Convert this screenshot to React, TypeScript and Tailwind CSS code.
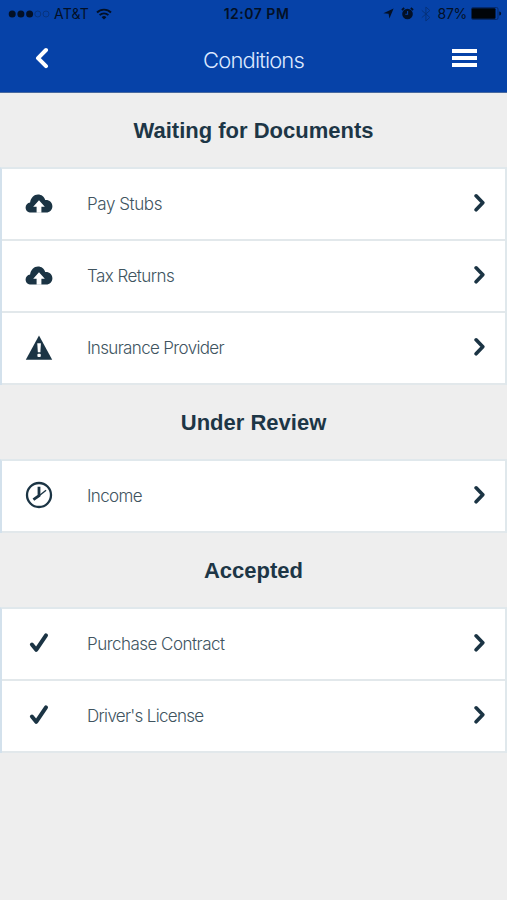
import type { ReactNode } from 'react'

interface Condition {
  name: string
  icon: ReactNode
  tracking: string
}

interface Section {
  title: string
  items: Condition[]
}

function CloudIcon() {
  return (
    <svg width="28" height="20" viewBox="0 0 28 20">
      <path
        d="M6.2 18.6C2.8 18.6.6 16.4.6 13.5c0-2.6 1.9-4.7 4.5-5C5.7 4 9 .6 13 .6c3.5 0 6.2 2.1 7.2 5.5 4.2-.3 7.2 2.5 7.2 6.2 0 3.6-2.7 6.3-6.2 6.3z"
        fill="#1b3444"
      />
      <path d="M14 6.2l5.8 6.6h-3.4v5.9h-4.8v-5.9H8.2z" fill="#fff" />
    </svg>
  )
}

function WarningIcon() {
  return (
    <svg width="28" height="26" viewBox="0 0 28 26">
      <path d="M14 .4L27.2 24.8H.8z" fill="#1b3444" />
      <path d="M12.3 8.2h3.6l-.5 9h-2.6z" fill="#fff" />
      <rect x="12.4" y="18.8" width="3.4" height="3.2" rx="1" fill="#fff" />
    </svg>
  )
}

function ClockIcon() {
  return (
    <svg width="28" height="28" viewBox="0 0 28 28" fill="none" stroke="#1b3444" className="-mt-px">
      <circle cx="14" cy="14" r="12" strokeWidth="2.3" />
      <path d="M14 5.8v8.9l-5.6 3.9" strokeWidth="2.8" />
      <path d="M13.5 15.2l7.6-5.9" strokeWidth="1.4" />
    </svg>
  )
}

function CheckIcon() {
  return (
    <svg width="20" height="22" viewBox="0 0 20 22" fill="none" className="-mt-px">
      <path d="M2.9 12.6l4.3 5.2L17 3.4" stroke="#1b3444" strokeWidth="4" strokeLinecap="round" strokeLinejoin="round" />
    </svg>
  )
}

const sections: Section[] = [
  {
    title: 'Waiting for Documents',
    items: [
      { name: 'Pay Stubs', icon: <CloudIcon />, tracking: 'tracking-[-0.42px]' },
      { name: 'Tax Returns', icon: <CloudIcon />, tracking: 'tracking-[-0.56px]' },
      { name: 'Insurance Provider', icon: <WarningIcon />, tracking: 'tracking-[-0.65px]' },
    ],
  },
  {
    title: 'Under Review',
    items: [{ name: 'Income', icon: <ClockIcon />, tracking: 'tracking-[-0.65px]' }],
  },
  {
    title: 'Accepted',
    items: [
      { name: 'Purchase Contract', icon: <CheckIcon />, tracking: 'tracking-[-0.52px]' },
      { name: "Driver's License", icon: <CheckIcon />, tracking: 'tracking-[-0.7px]' },
    ],
  },
]

function StatusBar() {
  return (
    <div className="grid h-7 grid-cols-[1fr_auto_1fr] items-center pb-px pl-2 pr-[5px] text-[14px] text-[#031026]">
      <div className="flex items-center">
        <svg width="42" height="8" viewBox="0 0 42 8">
          <circle cx="4.2" cy="4" r="3.5" fill="#031026" />
          <circle cx="12.9" cy="4" r="3.5" fill="#031026" />
          <circle cx="21.6" cy="4" r="3.5" fill="#031026" />
          <circle cx="29.8" cy="4" r="3" fill="none" stroke="#06347f" />
          <circle cx="38" cy="4" r="3" fill="none" stroke="#06347f" />
        </svg>
        <span className="ml-1 tracking-[0.2px]">AT&amp;T</span>
        <svg className="ml-[7px]" width="16" height="12" viewBox="0 0 16 12" fill="none" stroke="#031026">
          <path d="M1 4.5a10 10 0 0 1 14 0" strokeWidth="1.9" />
          <path d="M3.6 7.2a6.2 6.2 0 0 1 8.8 0" strokeWidth="1.8" />
          <path d="M8 11.6L5.6 9.2a3.4 3.4 0 0 1 4.8 0z" fill="#031026" stroke="none" />
        </svg>
      </div>
      <span className="pl-[3px] text-[14px] font-semibold tracking-[0.5px]">12:07 PM</span>
      <div className="flex items-center justify-end">
        <svg width="11" height="11" viewBox="0 0 11 11">
          <path d="M10.6.4L6.4 10.6 5.6 5.8.4 5.2z" fill="#031026" />
        </svg>
        <svg className="ml-[7px]" width="13" height="13" viewBox="0 0 13 13" fill="none">
          <circle cx="6.5" cy="7" r="5.3" fill="#031026" />
          <path d="M.9 3L3.2 1M12.1 3L9.8 1" stroke="#031026" strokeWidth="1.7" />
          <path d="M6.6 4v3.2H4.3" stroke="#0642a8" strokeWidth="1.1" />
        </svg>
        <svg className="ml-[7px]" width="10" height="16" viewBox="0 0 10 16" fill="none" stroke="#06327b">
          <path d="M.8 4.4l8 7L4.9 15V1l3.9 3.5-8 7.1" />
        </svg>
        <span className="ml-[7px] tracking-[-0.3px]">87%</span>
        <svg className="ml-1" width="31" height="13" viewBox="0 0 31 13">
          <rect x=".5" y=".5" width="26.5" height="12" rx="1.5" fill="none" stroke="#052a6c" />
          <rect x=".8" y="1.2" width="23.7" height="10.6" rx="1" fill="#010509" />
          <path d="M28.3 4.4c1.2.2 1.8 1 1.8 2.1s-.6 1.9-1.8 2.1z" fill="#031026" />
        </svg>
      </div>
    </div>
  )
}

export default function App() {
  return (
    <div className="flex h-[900px] w-[507px] flex-col overflow-hidden bg-[#eeeeee] font-['Inter',sans-serif]">
      <header className="h-[93px] border-b border-[#48699f] bg-[#0642a8]">
        <StatusBar />
        <div className="grid h-16 grid-cols-[1fr_auto_1fr] items-center pl-[35px] pr-[30px]">
          <svg width="14" height="22" viewBox="0 0 14 22" fill="none" className="-mt-1">
            <path d="M11 3L3 11.2l8 8" stroke="#fff" strokeWidth="4" strokeLinecap="round" strokeLinejoin="round" />
          </svg>
          <h1 className="pr-[5px] text-[22px] font-light tracking-[-0.85px] text-[#dce8ff]">Conditions</h1>
          <div className="-mt-1 flex w-[25px] flex-col gap-[3px] justify-self-end">
            <div className="h-1 bg-white" />
            <div className="h-1 bg-white" />
            <div className="h-1 bg-white" />
          </div>
        </div>
      </header>

      {sections.map((section) => (
        <section key={section.title}>
          <h2 className="flex h-[74px] items-center justify-center font-['Liberation_Sans',sans-serif] text-[22px] font-bold text-[#1d3646]">
            {section.title}
          </h2>
          <ul className="border-x-2 border-t-2 border-[#e0e8ec] border-l-[#d3e1ec]">
            {section.items.map((item) => (
              <li key={item.name} className="flex h-[72px] items-center border-b-2 border-[#e2e8eb] bg-white pb-px pl-[23px] pr-5">
                <div className="flex w-7 justify-center">{item.icon}</div>
                <span className={`ml-[34px] flex-1 pt-[3px] text-[17px] font-light text-[#40545f] ${item.tracking}`}>{item.name}</span>
                <svg width="12" height="20" viewBox="0 0 12 20" fill="none" className="-mt-px">
                  <path d="M3.1 2.8l6.7 7-6.7 7" stroke="#1b3444" strokeWidth="3.6" strokeLinecap="round" strokeLinejoin="round" />
                </svg>
              </li>
            ))}
          </ul>
        </section>
      ))}
    </div>
  )
}
